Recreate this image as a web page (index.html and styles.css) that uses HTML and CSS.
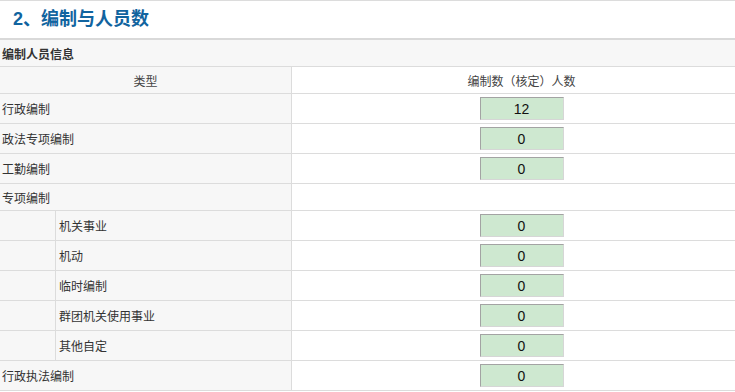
FILE: index.html
```html
<!DOCTYPE html>
<html lang="zh-CN">
<head>
<meta charset="utf-8">
<title>编制与人员数</title>
<link rel="stylesheet" href="styles.css">
</head>
<body>
<div class="page">
  <h2 class="title">2、编制与人员数</h2>
  <table class="grid">
    <colgroup>
      <col class="c-sub">
      <col class="c-label">
      <col class="c-val">
    </colgroup>
    <tr class="caption-row"><td colspan="3" class="caption">编制人员信息</td></tr>
    <tr class="head-row">
      <td colspan="2" class="head left">类型</td>
      <td class="head">编制数（核定）人数</td>
    </tr>
    <tr class="row"><td colspan="2" class="label">行政编制</td><td class="val"><input class="num" value="12"></td></tr>
    <tr class="row"><td colspan="2" class="label">政法专项编制</td><td class="val"><input class="num" value="0"></td></tr>
    <tr class="row"><td colspan="2" class="label">工勤编制</td><td class="val"><input class="num" value="0"></td></tr>
    <tr class="group-row"><td colspan="2" class="label">专项编制</td><td class="val"></td></tr>
    <tr class="row"><td class="blank"></td><td class="label sub">机关事业</td><td class="val"><input class="num" value="0"></td></tr>
    <tr class="row"><td class="blank"></td><td class="label sub">机动</td><td class="val"><input class="num" value="0"></td></tr>
    <tr class="row"><td class="blank"></td><td class="label sub">临时编制</td><td class="val"><input class="num" value="0"></td></tr>
    <tr class="row"><td class="blank"></td><td class="label sub">群团机关使用事业</td><td class="val"><input class="num" value="0"></td></tr>
    <tr class="row"><td class="blank"></td><td class="label sub">其他自定</td><td class="val"><input class="num" value="0"></td></tr>
    <tr class="row"><td colspan="2" class="label">行政执法编制</td><td class="val"><input class="num" value="0"></td></tr>
  </table>
</div>
</body>
</html>
```

FILE: styles.css
```css
html, body {
  margin: 0;
  padding: 0;
  background: #ffffff;
  overflow: hidden;
}

.page {
  width: 751px;
  border-top: 1px solid #dcdcdc;
  font-family: "Noto Sans CJK SC", "Liberation Sans", sans-serif;
  font-size: 12px;
  color: #333333;
}

.title {
  margin: 0;
  height: 37px;
  line-height: 37px;
  padding-left: 13px;
  font-size: 18px;
  font-weight: bold;
  color: #11649f;
  font-family: "Liberation Sans", "Noto Sans CJK SC", sans-serif;
}

.grid {
  width: 751px;
  border-collapse: separate;
  border-spacing: 0;
  border-top: 2px solid #d9d9d9;
  table-layout: fixed;
}

.c-sub { width: 56px; }
.c-label { width: 236px; }

.grid td {
  box-sizing: border-box;
  padding: 0;
  border-bottom: 1px solid #dcdcdc;
  vertical-align: middle;
}

.caption {
  height: 27px;
  background: #f7f7f7;
  font-weight: bold;
  padding-left: 2px !important;
  color: #333333;
}

.head {
  height: 27px;
  text-align: center;
  color: #444444;
}

.head.left,
.label,
.blank {
  background: #f7f7f7;
  border-right: 1px solid #dcdcdc;
}

.row td { height: 30px; }
.group-row td { height: 27px; }

.label {
  padding-left: 2px !important;
  color: #333333;
}

.label.sub {
  padding-left: 3px !important;
}

.val {
  text-align: center;
  background: #ffffff;
}

.num {
  display: block;
  margin: 0 auto;
  box-sizing: border-box;
  width: 84px;
  height: 23px;
  padding: 0;
  border: 1px solid;
  border-color: #a3a3a3 #d6d6d6 #d6d6d6 #a3a3a3;
  background: #cee8d0;
  font-family: "Liberation Sans", sans-serif;
  font-size: 14px;
  color: #111111;
  text-align: center;
}
```
